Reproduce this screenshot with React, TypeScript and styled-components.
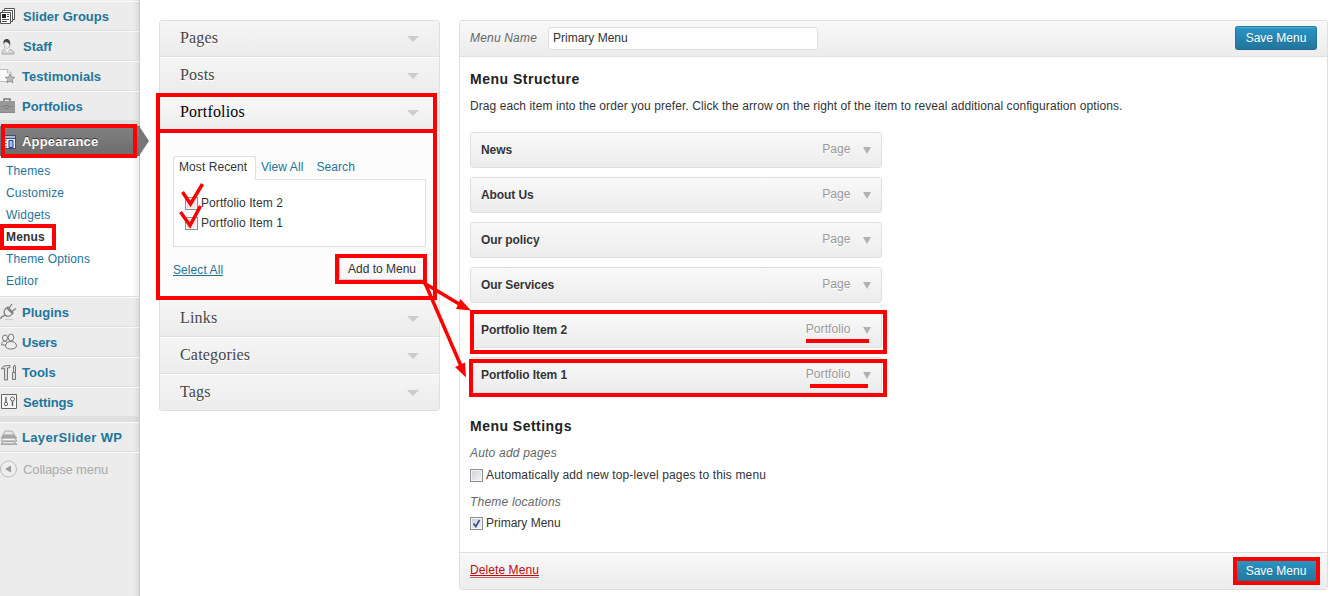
import React from "react";
import styled, { createGlobalStyle, css } from "styled-components";

const GlobalStyle = createGlobalStyle`
  * { box-sizing: border-box; }
  html, body { margin: 0; padding: 0; background: #fff; overflow: hidden; }
  body { font: 12px/18px "Liberation Sans", Arial, sans-serif; letter-spacing: 0.08px; color: #333; }
`;

const Page = styled.div`
  position: relative;
  display: flex;
  width: 1334px;
  height: 596px;
  overflow: hidden;
`;

/* ---------- admin sidebar ---------- */

const Sidebar = styled.nav`
  flex: none;
  width: 140px;
  padding-top: 1px;
  border-right: 1px solid #ccc;
  background: linear-gradient(to right, transparent 133px, rgba(0, 0, 0, 0.07) 139px), #ececec;
`;

const NavRow = styled.a<{ $current?: boolean; $indent?: number; $spacing?: number }>`
  position: relative;
  display: flex;
  align-items: center;
  height: 30px;
  padding: 2px 0 0 ${(p) => p.$indent ?? 22}px;
  border-top: 1px solid #f9f9f9;
  border-bottom: 1px solid #dfdfdf;
  font-size: 13px;
  font-weight: bold;
  letter-spacing: ${(p) => p.$spacing ?? 0}px;
  color: #21759b;
  white-space: nowrap;
  ${(p) =>
    p.$current &&
    css`
      color: #fff;
      width: 140px;
      border-color: #6d6d6d;
      background: linear-gradient(to top, #6d6d6d, #808080);
      text-shadow: 0 -1px 0 #333;
    `}
`;

const NavIcon = styled.svg`
  position: absolute;
  left: 0;
  top: 5px;
  width: 18px;
  height: 18px;
`;

const CurrentArrow = styled.svg`
  position: absolute;
  left: 139px;
  top: -1px;
  width: 10px;
  height: 30px;
`;

const Separator = styled.div`
  height: 5px;
  background: linear-gradient(to right, transparent 133px, rgba(0, 0, 0, 0.07) 139px), #dfdfdf;
`;

const Submenu = styled.ul`
  height: 141px;
  margin: 0;
  padding: 5px 0 0 6px;
  list-style: none;
  letter-spacing: 0.16px;
  border-bottom: 1px solid #dfdfdf;
  background: linear-gradient(to right, transparent 132px, rgba(0, 0, 0, 0.07) 139px), #fff;
`;

const SubItem = styled.li<{ $current?: boolean }>`
  height: 22px;
  line-height: 21px;
  color: ${(p) => (p.$current ? "#333" : "#21759b")};
  font-weight: ${(p) => (p.$current ? "bold" : "normal")};
`;

const Collapse = styled.div`
  position: relative;
  padding-left: 23px;
  height: 36px;
  border-top: 1px solid #f9f9f9;
  line-height: 34px;
  font-size: 13px;
  letter-spacing: -0.12px;
  color: #aaa;

  svg {
    top: 7px;
  }
`;

/* ---------- accordion ---------- */

const Accordion = styled.section`
  flex: none;
  width: 281px;
  height: 391px;
  margin: 20px 0 0 19px;
  border: 1px solid #dfdfdf;
  border-radius: 3px;
  background: #fcfcfc;
  overflow: hidden;
`;

const AccordionHead = styled.h3<{ $open?: boolean; $first?: boolean }>`
  display: flex;
  align-items: center;
  justify-content: space-between;
  height: ${(p) => (p.$first ? 36 : 37)}px;
  margin: 0;
  padding: 0 20px 2px 20px;
  border-top: ${(p) => (p.$first ? 0 : 1)}px solid #fff;
  border-bottom: 1px solid #dfdfdf;
  background: ${(p) =>
    p.$open ? "linear-gradient(to top, #ececec, #f9f9f9)" : "linear-gradient(to top, #ececec, #f5f5f5)"};
  font: normal 16px/20px "Liberation Serif", Georgia, serif;
  letter-spacing: 0.18px;
  color: ${(p) => (p.$open ? "#000" : "#464646")};
  text-shadow: 0 1px 0 #fff;

  &:last-child {
    border-bottom: 0;
    height: 36px;
  }
`;

const DownTriangle = styled.i`
  width: 0;
  height: 0;
  margin-top: 2px;
  border: 6px solid transparent;
  border-top-color: #ccc;
  border-bottom: 0;
`;

const AccordionBody = styled.div`
  height: 169px;
  padding: 25px 13px 0;
`;

const Tabs = styled.div`
  display: flex;
  height: 23px;
  line-height: 22px;
  color: #21759b;
`;

const Tab = styled.span<{ $active?: boolean }>`
  padding: 0 6px 0 5px;
  margin-right: 2px;
  ${(p) =>
    p.$active &&
    css`
      height: 24px;
      width: 83px;
      margin-right: 0;
      border: 1px solid #dfdfdf;
      border-bottom: 0;
      border-radius: 3px 3px 0 0;
      background: #fff;
      color: #333;
      z-index: 1;
      line-height: 21px;
    `}
`;

const TabPanel = styled.div`
  width: 253px;
  height: 68px;
  padding: 13px 11px;
  border: 1px solid #dfdfdf;
  background: #fff;
`;

const CheckLabel = styled.label<{ $height?: number; $spacing?: number }>`
  display: flex;
  align-items: center;
  height: ${(p) => p.$height ?? 20}px;
  letter-spacing: ${(p) => p.$spacing ?? 0.085}px;
`;

const CheckBox = styled.span`
  position: relative;
  display: block;
  width: 13px;
  height: 13px;
  margin-right: 3px;
  border: 1px solid #8e8f8f;
  background: linear-gradient(135deg, #cbcfd5, #f6f6f6);
  box-shadow: inset 0 0 0 1px #f4f4f4;
`;

const Tick = styled.svg`
  position: absolute;
  left: 1px;
  top: 1px;
  width: 9px;
  height: 9px;
`;

const BodyActions = styled.div`
  display: flex;
  justify-content: space-between;
  padding: 9px 1px 0 0;
`;

const Link = styled.a`
  padding-top: 5px;
  color: #21759b;
  text-decoration: underline;
`;

const GreyButton = styled.button`
  width: 86px;
  height: 24px;
  padding: 1px 0 0;
  border: 1px solid #ccc;
  border-radius: 3px;
  background: linear-gradient(to top, #f4f4f4, #fefefe);
  font: 12px "Liberation Sans", Arial, sans-serif;
  color: #333;
`;

/* ---------- menu editor ---------- */

const Editor = styled.main`
  display: flex;
  flex-direction: column;
  flex: none;
  width: 869px;
  height: 570px;
  margin: 20px 0 0 19px;
  border: 1px solid #dfdfdf;
  border-radius: 3px;
  overflow: hidden;
`;

const Bar = styled.div<{ $footer?: boolean }>`
  display: flex;
  align-items: center;
  flex: none;
  height: ${(p) => (p.$footer ? 37 : 36)}px;
  padding: 0 10px ${(p) => (p.$footer ? 0 : 1)}px;
  border: 0 solid #dfdfdf;
  border-width: ${(p) => (p.$footer ? "1px 0 0" : "0 0 1px")};
  background: linear-gradient(to top, #ececec, #f9f9f9);
`;

const Hint = styled.em`
  flex: none;
  width: 67px;
  letter-spacing: 0.18px;
  white-space: nowrap;
  color: #666;
`;

const NameField = styled.input`
  width: 270px;
  height: 23px;
  margin: 1px 0 0 11px;
  padding: 0 4px 1px;
  border: 1px solid #dfdfdf;
  border-radius: 3px;
  background: #fff;
  font: 12px "Liberation Sans", Arial, sans-serif;
  color: #333;
`;

const SaveButton = styled.button`
  width: 82px;
  height: 24px;
  margin-left: auto;
  padding: 0;
  border: 1px solid #21759b;
  border-bottom-color: #1e6a8d;
  border-radius: 3px;
  background: linear-gradient(to bottom, #2a95c5, #21759b);
  box-shadow: inset 0 1px 0 rgba(120, 200, 230, 0.5);
  font: 12px "Liberation Sans", Arial, sans-serif;
  color: #fff;
  text-shadow: 0 1px 0 rgba(0, 0, 0, 0.1);
`;

const EditorBody = styled.div`
  flex: 1;
  padding: 13px 10px 0;
`;

const Heading = styled.h3<{ $spacing?: number }>`
  margin: 0;
  font-size: 14px;
  line-height: 18px;
  letter-spacing: ${(p) => p.$spacing ?? 0.48}px;
  color: #222;
`;

const Intro = styled.p`
  margin: 9px 0 17px;
`;

const ItemList = styled.ul`
  display: grid;
  gap: 9px;
  margin: 0 0 24px;
  padding: 0;
  list-style: none;
`;

const MenuItem = styled.li`
  display: flex;
  align-items: center;
  width: 412px;
  height: 36px;
  padding: 0 10.5px 1px 10px;
  border: 1px solid #dfdfdf;
  border-radius: 3px;
  background: linear-gradient(to top, #ececec, #f9f9f9);
  text-shadow: 0 1px 0 #fff;
`;

const ItemTitle = styled.strong`
  flex: 1;
  letter-spacing: -0.08px;
`;

const ItemType = styled.span`
  margin: -2px 12px 0 0;
  color: #999;
`;

const SmallTriangle = styled.i`
  width: 0;
  height: 0;
  margin-top: 2px;
  border: 4px solid transparent;
  border-top: 7px solid #b2b2b2;
  border-bottom: 0;
`;

const SettingName = styled.div<{ $gap: number }>`
  margin-top: ${(p) => p.$gap}px;
  font-style: italic;
  letter-spacing: 0.2px;
  color: #666;
`;

const DeleteLink = styled.a`
  border-bottom: 1px solid #d55;
  line-height: 13px;
  color: #bc0b0b;
  text-decoration: underline;
`;

/* ---------- red annotations over the page ---------- */

const Mark = styled.div<{ $x: number; $y: number; $w: number; $h: number }>`
  position: absolute;
  z-index: 2;
  left: ${(p) => p.$x}px;
  top: ${(p) => p.$y}px;
  width: ${(p) => p.$w}px;
  height: ${(p) => p.$h}px;
  border: ${(p) => (p.$h > 4 ? 4 : 2)}px solid #f00;
`;

const Strokes = styled.svg`
  position: absolute;
  z-index: 3;
  left: 0;
  top: 0;
  pointer-events: none;
`;

const icons: Record<string, React.ReactNode> = {
  slides: (
    <g fill="#fff" stroke="#555">
      <path d="M4.500 1.500h10v11h-10z" />
      <path d="M2.500 3.500h10v11h-10z" />
      <path d="M.5 5.500h10v11H.5z" />
      <path d="M2 7h4v4H2z" fill="#222" stroke="none" />
      <path d="M7 7.500h2M7 9.500h2M2 12.500h7M2 14.500h5" />
    </g>
  ),
  person: (
    <g>
      <path d="M2 17c0-4 2-5 5-5s7 1 7 5z" fill="#d6d6d6" stroke="#999" strokeWidth=".8" />
      <path d="M5 11l2 4 3-4z" fill="#fff" />
      <ellipse cx="7" cy="7.500" rx="3" ry="4" fill="#eee" stroke="#999" strokeWidth=".6" />
      <path d="M3.500 7C3 3 5 2 7 2s4 2 3 7C9 6 8 5 5 5z" fill="#444" />
    </g>
  ),
  star: (
    <g>
      <path d="M0 2.500h8l3 3v9H0" fill="#fafafa" stroke="#bbb" />
      <path d="M7.500 2.500v3.500h3.500" fill="none" stroke="#bbb" />
      <path d="M10 7l1.400 3 3.300.3-2.500 2.200.8 3.300-3-1.700-3 1.700.8-3.300-2.500-2.200 3.300-.3z" fill="#bbb" stroke="#888" strokeWidth=".8" />
    </g>
  ),
  briefcase: (
    <g>
      <path d="M4 4V2h6v2" fill="none" stroke="#777" strokeWidth="1.500" />
      <path d="M-1 4h16v12H-1z" fill="#999" />
      <path d="M-1 9.500h16" stroke="#888" />
      <path d="M5 8.500h3v3H5z" fill="#aaa" stroke="#777" />
      <path d="M-1 15.500h16" stroke="#888" />
    </g>
  ),
  appearance: (
    <g>
      <path d="M1 3h15v14H1z" fill="#3f4f70" />
      <path d="M2 4h13v2H2z" fill="#a9b9d8" />
      <path d="M2 7h13v9H2z" fill="#eef3ff" />
      <path d="M3 8.500h4M3 11.500h4M3 14.500h4" stroke="#64a045" strokeWidth="1.500" />
      <path d="M9 8.500h4v7H9z" fill="#a9baff" stroke="#26378c" />
    </g>
  ),
  plug: (
    <g fill="none" stroke="#777" strokeWidth="1.200">
      <path d="M1 16c-1-3 2-2 4-4" />
      <path d="M5 12c-2-3-1-6 3-8l5 6c-3 4-6 4-8 2z" fill="#eee" />
      <path d="M9 5l3-4M12 8.500l4-3M7 5.500l6 5.500" />
      <path d="M5 16.500h8" stroke="#ccc" />
    </g>
  ),
  users: (
    <g fill="#eee" stroke="#777">
      <ellipse cx="5" cy="5" rx="2.500" ry="3" />
      <path d="M1.500 12c0-5 6-5 7 0z" />
      <ellipse cx="11" cy="4.500" rx="2.800" ry="3.500" />
      <path d="M5.500 13c0-6 11-6 11 0 0 4-11 4-11 0z" />
    </g>
  ),
  tools: (
    <g fill="#ddd" stroke="#777">
      <path d="M1.500 6c1-3 3-3.500 8.500-3.500v2L7.500 5v12h-3V5.500z" />
      <path d="M13.500 10V4l1-2 1 2v6" />
      <path d="M12.500 9.500h3v7h-3z" />
    </g>
  ),
  settings: (
    <g fill="none" stroke="#666">
      <path d="M1.500 1.500h15v14h-15z" fill="#f8f8f8" />
      <path d="M6 4v5M12.500 8v5" strokeWidth="1.500" />
      <circle cx="6" cy="11" r="1.700" />
      <circle cx="12.500" cy="6" r="2" />
    </g>
  ),
  layers: (
    <g stroke="#999" strokeWidth=".7">
      <path d="M3 13h11l3 3.500H1z" fill="#bbb" />
      <path d="M3 9h11l3 4H1z" fill="#ddd" />
      <path d="M4 6h9l4 4H1z" fill="#aaa" />
      <path d="M5 3h7l3 4H3z" fill="#ddd" />
      <path d="M3 11.500h11M3 14.500h11M6 5h5" stroke="#fff" />
    </g>
  ),
  collapse: (
    <g>
      <circle cx="8.500" cy="9" r="8" fill="#eee" stroke="#bbb" />
      <path d="M5 9l6-3.500v7z" fill="#999" />
    </g>
  ),
};

const Icon = ({ name }: { name: string }) => (
  <NavIcon viewBox="0 0 18 18">{icons[name]}</NavIcon>
);

const topRows = [
  { label: "Slider Groups", icon: "slides", indent: 23 },
  { label: "Staff", icon: "person", indent: 23 },
  { label: "Testimonials", icon: "star", indent: 22, spacing: 0.05 },
  { label: "Portfolios", icon: "briefcase", indent: 22 },
];
const lowerRows = [
  { label: "Plugins", icon: "plug", indent: 22 },
  { label: "Users", icon: "users", indent: 22, spacing: -0.2 },
  { label: "Tools", icon: "tools", indent: 22 },
  { label: "Settings", icon: "settings", indent: 23, spacing: -0.1 },
];
const subItems = ["Themes", "Customize", "Widgets", "Menus", "Theme Options", "Editor"];
const menuItems = [
  ["News", "Page"],
  ["About Us", "Page"],
  ["Our policy", "Page"],
  ["Our Services", "Page"],
  ["Portfolio Item 2", "Portfolio"],
  ["Portfolio Item 1", "Portfolio"],
];

const marks = [
  [1, 124, 136, 34],
  [0, 224, 56, 26],
  [156, 93, 281, 40],
  [156, 129, 281, 171],
  [335, 254, 92, 30],
  [470, 310, 417, 44],
  [469, 359, 418, 38],
  [806, 339, 63, 4],
  [810, 384, 58, 4],
  [1233, 557, 87, 28],
];

export default function App() {
  return (
    <Page>
      <GlobalStyle />
      <Sidebar>
        {topRows.map((r) => (
          <NavRow key={r.label} $indent={r.indent} $spacing={r.spacing}>
            <Icon name={r.icon} />
            {r.label}
          </NavRow>
        ))}
        <Separator />
        <NavRow $current $spacing={0.2}>
          <Icon name="appearance" />
          Appearance
          <CurrentArrow viewBox="0 0 10 30">
            <path d="M0 0L10 15L0 30z" fill="#777" />
          </CurrentArrow>
        </NavRow>
        <Submenu>
          {subItems.map((s) => (
            <SubItem key={s} $current={s === "Menus"}>
              {s}
            </SubItem>
          ))}
        </Submenu>
        {lowerRows.map((r) => (
          <NavRow key={r.label} $indent={r.indent} $spacing={r.spacing}>
            <Icon name={r.icon} />
            {r.label}
          </NavRow>
        ))}
        <Separator />
        <NavRow $spacing={0.35}>
          <Icon name="layers" />
          LayerSlider WP
        </NavRow>
        <Collapse>
          <Icon name="collapse" />
          Collapse menu
        </Collapse>
      </Sidebar>

      <Accordion>
        <AccordionHead $first>
          Pages <DownTriangle />
        </AccordionHead>
        <AccordionHead>
          Posts <DownTriangle />
        </AccordionHead>
        <AccordionHead $open>
          Portfolios <DownTriangle />
        </AccordionHead>
        <AccordionBody>
          <Tabs>
            <Tab $active>Most Recent</Tab>
            <Tab>View All</Tab>
            <Tab>Search</Tab>
          </Tabs>
          <TabPanel>
            <CheckLabel>
              <CheckBox />
              Portfolio Item 2
            </CheckLabel>
            <CheckLabel>
              <CheckBox />
              Portfolio Item 1
            </CheckLabel>
          </TabPanel>
          <BodyActions>
            <Link>Select All</Link>
            <GreyButton>Add to Menu</GreyButton>
          </BodyActions>
        </AccordionBody>
        <AccordionHead>
          Links <DownTriangle />
        </AccordionHead>
        <AccordionHead>
          Categories <DownTriangle />
        </AccordionHead>
        <AccordionHead>
          Tags <DownTriangle />
        </AccordionHead>
      </Accordion>

      <Editor>
        <Bar>
          <Hint>Menu Name</Hint>
          <NameField defaultValue="Primary Menu" />
          <SaveButton>Save Menu</SaveButton>
        </Bar>
        <EditorBody>
          <Heading $spacing={0.5}>Menu Structure</Heading>
          <Intro>
            Drag each item into the order you prefer. Click the arrow on the right of the item to reveal
            additional configuration options.
          </Intro>
          <ItemList>
            {menuItems.map(([title, type]) => (
              <MenuItem key={title}>
                <ItemTitle>{title}</ItemTitle>
                <ItemType>{type}</ItemType>
                <SmallTriangle />
              </MenuItem>
            ))}
          </ItemList>
          <Heading>Menu Settings</Heading>
          <SettingName $gap={9}>Auto add pages</SettingName>
          <CheckLabel $height={26} $spacing={0.13}>
            <CheckBox />
            Automatically add new top-level pages to this menu
          </CheckLabel>
          <SettingName $gap={5}>Theme locations</SettingName>
          <CheckLabel $height={24} $spacing={0}>
            <CheckBox>
              <Tick viewBox="0 0 9 9">
                <path d="M1.500 4.500L3.800 7.500L7.500 1" fill="none" stroke="#3f5496" strokeWidth="1.800" />
              </Tick>
            </CheckBox>
            Primary Menu
          </CheckLabel>
        </EditorBody>
        <Bar $footer>
          <DeleteLink>Delete Menu</DeleteLink>
          <SaveButton>Save Menu</SaveButton>
        </Bar>
      </Editor>

      {marks.map(([x, y, w, h]) => (
        <Mark key={`${x}-${y}`} $x={x} $y={y} $w={w} $h={h} />
      ))}
      <Strokes width="1334" height="596" viewBox="0 0 1334 596">
        <g fill="none" stroke="#f00" strokeWidth="3.500">
          <path d="M182.500 192L190.500 204L202.500 184" />
          <path d="M180.500 212L190 225.500L200.500 206" />
          <path d="M424 283L460 304.500" />
          <path d="M425 283L461 366" />
        </g>
        <path d="M471 310.500L460.500 299L456 309z" fill="#f00" />
        <path d="M466 377.500L465 362.500L455 367z" fill="#f00" />
      </Strokes>
    </Page>
  );
}
